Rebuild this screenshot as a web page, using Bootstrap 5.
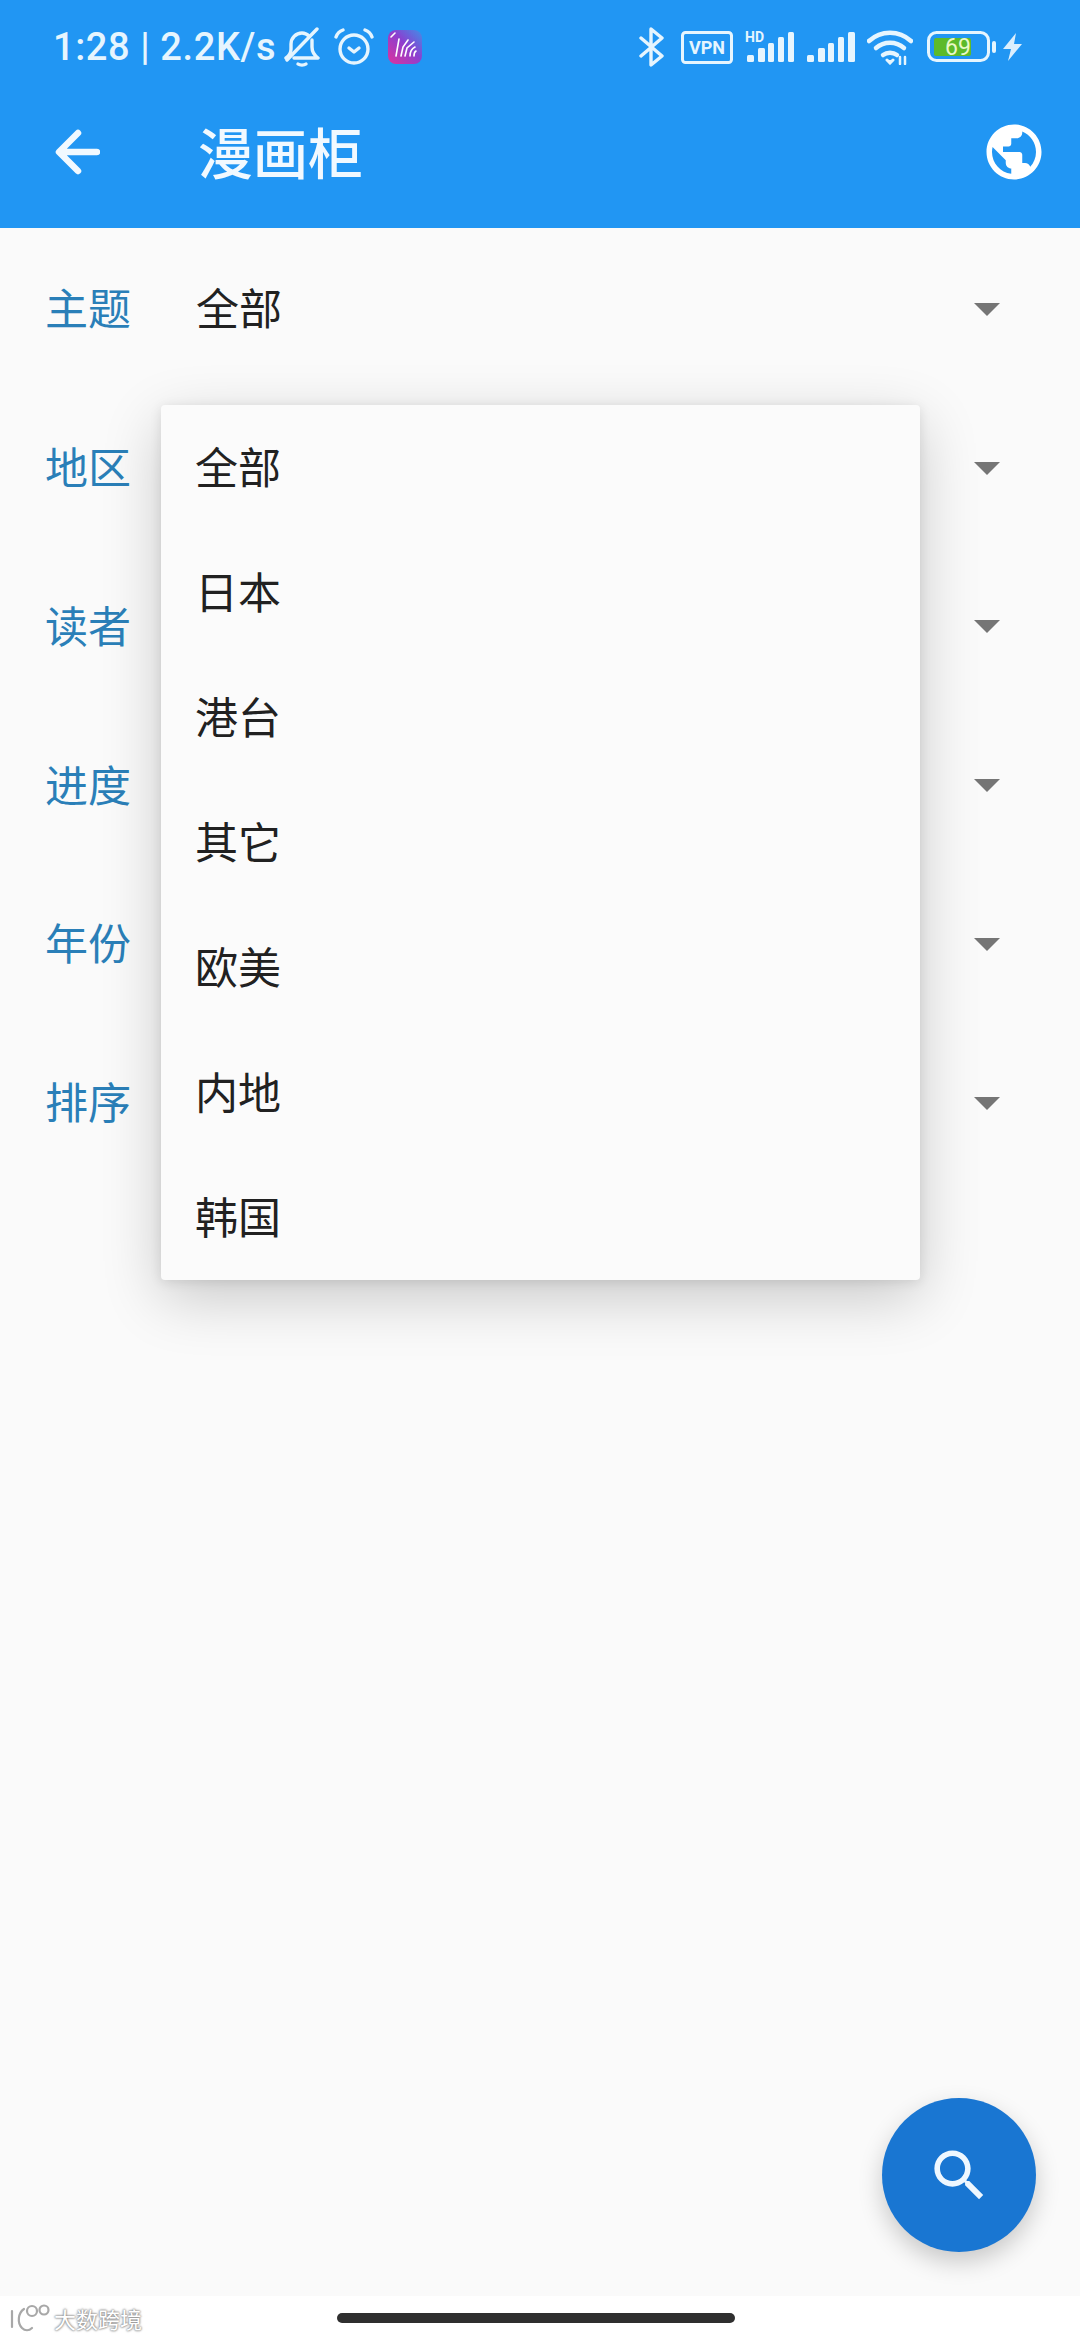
<!DOCTYPE html>
<html lang="zh-CN">
<head>
    <meta charset="UTF-8">
    <meta name="viewport" content="width=device-width, initial-scale=1.0">
    <title>漫画柜</title>
    <link href="https://cdn.jsdelivr.net/npm/bootstrap@5.3.0/dist/css/bootstrap.min.css" rel="stylesheet">
    <style>
        body {
            background-color: #fff;
            font-family: "Noto Sans CJK SC", "Noto Sans", sans-serif;
        }
        .phone-page {
            width: 1080px;
            height: 2340px;
            overflow: hidden;
        }
        .app-head {
            height: 228px;
            background-color: #2196f3;
            color: #e6f5fe;
        }
        .status-row {
            height: 90px;
            padding: 4px 58px 0 53px;
        }
        .status-time {
            font-family: Roboto, "Liberation Sans", sans-serif;
            font-size: 38px;
            font-weight: 500;
            line-height: 1;
            margin-right: 8px;
            letter-spacing: .6px;
            white-space: nowrap;
        }
        .status-icon { flex: none; display: block; }
        .icon-gap-s { margin-left: 7px; }
        .icon-gap-m { margin-left: 12px; }
        .icon-gap-l { margin-left: 14px; }
        .tool-row {
            height: 138px;
            padding: 0 33px 14px 55px;
        }
        .page-title {
            font-size: 55px;
            font-weight: 500;
            line-height: 1;
            margin: 0 0 4px 98px;
            color: #f1f9ff;
        }
        .filter-list {
            padding-top: 2px;
            background-color: #fafafa;
        }
        .filter-row {
            height: 158.8px;
            padding: 0 80px 0 45px;
            font-size: 43px;
        }
        .filter-label {
            width: 151px;
            padding-bottom: 6px;
            color: #2a7fb8;
        }
        .filter-value {
            padding-bottom: 6px;
            color: #212121;
        }
        .filter-caret {
            width: 0;
            height: 0;
            border-left: 13px solid transparent;
            border-right: 13px solid transparent;
            border-top: 13px solid #757575;
        }
        .page-fill {
            background-color: #fafafa;
        }
        .nav-strip {
            height: 44px;
            background-color: #fff;
            padding-left: 337px;
        }
        .home-bar {
            width: 398px;
            height: 10px;
            margin-top: 17px;
            border-radius: 5px;
            background-color: #2f2f2f;
        }
        .pick-menu {
            top: 405px;
            left: 161px;
            width: 759px;
            padding: 0;
            border: 0;
            border-radius: 4px;
            background-color: #fbfbfb;
            box-shadow: 0 18px 60px rgba(0,0,0,.2), 0 2px 12px rgba(0,0,0,.1);
        }
        .pick-item {
            height: 125px;
            padding: 0 0 0 34px;
            font-size: 43px;
            color: #212121;
            line-height: 121px;
        }
        .search-fab {
            right: 44px;
            bottom: 88px;
            width: 154px;
            height: 154px;
            border: 0;
            padding: 0;
            background-color: #1976d2;
            box-shadow: 0 10px 24px rgba(0,0,0,.2);
        }
        .search-fab:hover { background-color: #1976d2; }
        .water-mark {
            left: 10px;
            bottom: 7px;
            color: #fff;
            font-size: 22px;
            line-height: 1;
            text-shadow: 0 0 2px #8d8d8d, 0 0 2px #8d8d8d, 0 0 3px #aaa;
        }
    </style>
</head>
<body>
    <div class="phone-page position-relative d-flex flex-column">
        <header class="app-head flex-shrink-0">
            <div class="status-row d-flex align-items-center justify-content-between">
                <div class="d-flex align-items-center">
                    <span class="status-time">1:28 | 2.2K/s</span>
                    <!-- muted bell -->
                    <svg class="status-icon" width="36" height="40" viewBox="0 0 36 40" fill="none" stroke="#e6f5fe" stroke-width="3.4" stroke-linecap="round" stroke-linejoin="round">
                        <path d="M2 31c3-2 5-5 5-9v-5c0-6 5-11 11-11 3 0 5 1 7 3"/>
                        <path d="M28 13v7c0 4 2 8 6 11H10"/>
                        <path d="M33 2 3 33"/>
                        <path d="M14 37c2 1.500 6 1.500 8 0"/>
                    </svg>
                    <!-- alarm -->
                    <svg class="status-icon icon-gap-l" width="40" height="38" viewBox="0 0 40 38" fill="none" stroke="#e6f5fe" stroke-width="3.4" stroke-linecap="round" stroke-linejoin="round">
                        <circle cx="20" cy="21" r="14"/>
                        <path d="M2 9c1-3 4-6 7-7M38 9c-1-3-4-6-7-7"/>
                        <path d="M15 20l5 4 5-4"/>
                    </svg>
                    <!-- app notification -->
                    <svg class="status-icon icon-gap-l" width="34" height="34" viewBox="0 0 34 34" fill="none">
                        <defs>
                            <linearGradient id="appFill" x1="0" y1="1" x2="1" y2="0">
                                <stop offset="0" stop-color="#e0329c"/>
                                <stop offset=".55" stop-color="#8b40d0"/>
                                <stop offset="1" stop-color="#3f8fe8"/>
                            </linearGradient>
                        </defs>
                        <rect width="34" height="34" rx="8" fill="url(#appFill)"/>
                        <g stroke="#fff" stroke-width="1.6" stroke-linecap="round">
                            <path d="M8 26 11 9M13 26l2-9 5-7M17 26l2-8 7-6M22 26c0-4 1-7 5-9M26 26c0-2 0-4 2-5M3 7l4-4" />
                        </g>
                    </svg>
                </div>
                <div class="d-flex align-items-center">
                    <!-- bluetooth -->
                    <svg class="status-icon" width="26" height="40" viewBox="0 0 26 40" fill="none" stroke="#e6f5fe" stroke-width="3.4" stroke-linecap="round" stroke-linejoin="round">
                        <path d="M2 11 23 29 12 38V2l11 9L2 29"/>
                    </svg>
                    <!-- vpn -->
                    <svg class="status-icon ms-3" width="52" height="33" viewBox="0 0 52 33">
                        <rect x="1.500" y="1.500" width="49" height="30" rx="3" fill="none" stroke="#e6f5fe" stroke-width="3"/>
                        <text x="26" y="23" text-anchor="middle" font-family="Roboto, sans-serif" font-size="18" font-weight="700" fill="#e6f5fe">VPN</text>
                    </svg>
                    <!-- hd signal -->
                    <svg class="status-icon icon-gap-m" width="50" height="36" viewBox="0 0 50 36" fill="#e6f5fe">
                        <text x="0" y="13" font-family="Roboto, sans-serif" font-size="14" font-weight="700">HD</text>
                        <rect x="2" y="26" width="7" height="7" rx="1.500"/>
                        <rect x="13" y="19" width="7" height="14" rx="1.500"/>
                        <rect x="23" y="14" width="6" height="19" rx="1.500"/>
                        <rect x="33" y="8" width="6" height="25" rx="1.500"/>
                        <rect x="43" y="3" width="6" height="30" rx="1.500"/>
                    </svg>
                    <!-- signal -->
                    <svg class="status-icon icon-gap-m" width="48" height="36" viewBox="0 0 48 36" fill="#e6f5fe">
                        <rect x="0" y="26" width="7" height="7" rx="1.500"/>
                        <rect x="11" y="19" width="7" height="14" rx="1.500"/>
                        <rect x="21" y="14" width="6" height="19" rx="1.500"/>
                        <rect x="31" y="8" width="6" height="25" rx="1.500"/>
                        <rect x="41" y="3" width="7" height="30" rx="1.500"/>
                    </svg>
                    <!-- wifi -->
                    <svg class="status-icon icon-gap-m" width="46" height="36" viewBox="0 0 46 36" fill="none" stroke="#e6f5fe" stroke-width="4.500" stroke-linecap="round">
                        <path d="M2 12C14 1 32 1 44 12"/>
                        <path d="M9 19c8-7 20-7 28 0"/>
                        <path d="M16 26c4-3 10-3 14 0"/>
                        <path d="M20 31l3 3 3-3" fill="#e6f5fe" stroke-width="3"/>
                        <path d="M33 28v7M38 28v7" stroke-width="2.500"/>
                    </svg>
                    <!-- battery -->
                    <svg class="status-icon icon-gap-l" width="69" height="32" viewBox="0 0 69 32">
                        <rect x="1.500" y="1.500" width="60" height="28" rx="8" fill="none" stroke="#e6f5fe" stroke-width="3"/>
                        <rect x="7" y="7" width="37" height="18" rx="2" fill="#5dba2a"/>
                        <rect x="65" y="10" width="4" height="12" rx="2" fill="#e6f5fe"/>
                        <text x="31" y="24" text-anchor="middle" font-family="Roboto, sans-serif" font-size="23" fill="#eaf9c8">69</text>
                    </svg>
                    <!-- bolt -->
                    <svg class="status-icon icon-gap-s" width="19" height="28" viewBox="0 0 19 28" fill="#dceffd">
                        <path d="M13 0 0 16h8L5 28 19 11h-8z"/>
                    </svg>
                </div>
            </div>
            <div class="tool-row d-flex align-items-center">
                <svg class="status-icon" width="45" height="46" viewBox="0 0 45 46" fill="none" stroke="#f1f9ff" stroke-width="6.500" stroke-linecap="round" stroke-linejoin="round">
                    <path d="M42 23H5M23 4 4 23l19 19"/>
                </svg>
                <h1 class="page-title">漫画柜</h1>
                <svg class="status-icon ms-auto" width="66" height="66" viewBox="0 0 24 24" fill="#fff">
                    <path d="M12 2C6.480 2 2 6.480 2 12s4.480 10 10 10 10-4.480 10-10S17.520 2 12 2zm-1 17.930c-3.950-.490-7-3.850-7-7.930 0-.620.080-1.210.210-1.790L9 15v1c0 1.100.900 2 2 2v1.930zm6.900-2.540c-.260-.810-1-1.390-1.900-1.390h-1v-3c0-.550-.450-1-1-1H8v-2h2c.550 0 1-.450 1-1V7h2c1.100 0 2-.900 2-2v-.410c2.930 1.190 5 4.060 5 7.410 0 2.080-.800 3.970-2.100 5.390z"/>
                </svg>
            </div>
        </header>

        <main class="filter-list flex-shrink-0">
            <div class="filter-row d-flex align-items-center">
                <span class="filter-label">主题</span>
                <span class="filter-value flex-grow-1">全部</span>
                <span class="filter-caret"></span>
            </div>
            <div class="filter-row d-flex align-items-center">
                <span class="filter-label">地区</span>
                <span class="flex-grow-1"></span>
                <span class="filter-caret"></span>
            </div>
            <div class="filter-row d-flex align-items-center">
                <span class="filter-label">读者</span>
                <span class="flex-grow-1"></span>
                <span class="filter-caret"></span>
            </div>
            <div class="filter-row d-flex align-items-center">
                <span class="filter-label">进度</span>
                <span class="flex-grow-1"></span>
                <span class="filter-caret"></span>
            </div>
            <div class="filter-row d-flex align-items-center">
                <span class="filter-label">年份</span>
                <span class="flex-grow-1"></span>
                <span class="filter-caret"></span>
            </div>
            <div class="filter-row d-flex align-items-center">
                <span class="filter-label">排序</span>
                <span class="flex-grow-1"></span>
                <span class="filter-caret"></span>
            </div>
        </main>
        <div class="page-fill flex-grow-1"></div>
        <div class="nav-strip flex-shrink-0">
            <div class="home-bar"></div>
        </div>

        <!-- open dropdown for 地区 -->
        <div class="dropdown-menu show pick-menu">
            <a class="dropdown-item pick-item" href="#">全部</a>
            <a class="dropdown-item pick-item" href="#">日本</a>
            <a class="dropdown-item pick-item" href="#">港台</a>
            <a class="dropdown-item pick-item" href="#">其它</a>
            <a class="dropdown-item pick-item" href="#">欧美</a>
            <a class="dropdown-item pick-item" href="#">内地</a>
            <a class="dropdown-item pick-item" href="#">韩国</a>
        </div>

        <button type="button" class="btn search-fab rounded-circle position-absolute d-flex align-items-center justify-content-center">
            <svg width="67" height="67" viewBox="0 0 24 24" fill="#eef7ff">
                <path d="M15.500 14h-.790l-.280-.270C15.410 12.590 16 11.110 16 9.500 16 5.910 13.090 3 9.500 3S3 5.910 3 9.500 5.910 16 9.500 16c1.610 0 3.090-.590 4.230-1.570l.270.280v.790l5 4.990L20.490 19l-4.990-5zm-6 0C7.010 14 5 11.990 5 9.500S7.010 5 9.500 5 14 7.010 14 9.500 11.990 14 9.500 14z"/>
            </svg>
        </button>

        <div class="water-mark position-absolute d-flex align-items-center">
            <svg width="40" height="30" viewBox="0 0 40 30" fill="none" stroke="#a8a8a8" stroke-width="2.200" stroke-linecap="round">
                <path d="M2 8v16M14 6C8 10 7 20 12 25c3 3 7 3 10 0"/>
                <circle cx="22" cy="8" r="5"/>
                <circle cx="34" cy="7" r="4.500"/>
            </svg>
            <span class="ms-1">大数跨境</span>
        </div>
    </div>
    <script src="https://cdn.jsdelivr.net/npm/bootstrap@5.3.0/dist/js/bootstrap.bundle.min.js"></script>
</body>
</html>
